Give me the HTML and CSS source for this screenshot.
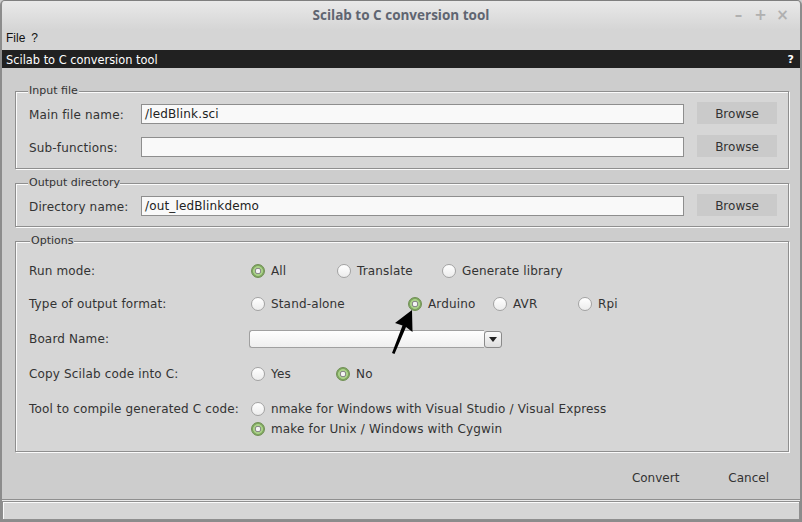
FILE: index.html
```html
<!DOCTYPE html>
<html>
<head>
<meta charset="utf-8">
<title>Scilab to C conversion tool</title>
<link rel="stylesheet" href="styles.css">
</head>
<body>
<div class="window">
  <header class="titlebar">
    <span></span>
    <span class="title">Scilab to C conversion tool</span>
    <div class="controls"><span>&#8211;</span><span>+</span><span>&#215;</span></div>
  </header>
  <nav class="menubar"><span>File</span><span>?</span></nav>
  <div class="docbar"><span>Scilab to C conversion tool</span><span class="help">?</span></div>
  <main class="content">
    <section class="group g-input">
      <span class="legend">Input file</span>
      <div class="filerow">
        <span class="label">Main file name:</span>
        <div class="field">/ledBlink.sci</div>
        <button class="browse">Browse</button>
      </div>
      <div class="filerow">
        <span class="label">Sub-functions:</span>
        <div class="field"></div>
        <button class="browse">Browse</button>
      </div>
    </section>
    <section class="group g-output">
      <span class="legend clip">Output directory</span>
      <div class="filerow">
        <span class="label">Directory name:</span>
        <div class="field">/out_ledBlinkdemo</div>
        <button class="browse">Browse</button>
      </div>
    </section>
    <section class="group g-options">
      <span class="legend opt">Options</span>
      <div class="orow">
        <span class="olabel">Run mode:</span>
        <div class="choices">
          <label class="radio w86"><i class="dot on"></i>All</label>
          <label class="radio w105"><i class="dot"></i>Translate</label>
          <label class="radio"><i class="dot"></i>Generate library</label>
        </div>
      </div>
      <div class="orow">
        <span class="olabel">Type of output format:</span>
        <div class="choices">
          <label class="radio w157"><i class="dot"></i>Stand-alone</label>
          <label class="radio w85"><i class="dot on"></i>Arduino</label>
          <label class="radio w85"><i class="dot"></i>AVR</label>
          <label class="radio"><i class="dot"></i>Rpi</label>
        </div>
      </div>
      <div class="orow">
        <span class="olabel">Board Name:</span>
        <div class="combo">
          <div class="combo-field"></div>
          <div class="combo-btn"><svg width="8" height="5" viewBox="0 0 8 5"><path d="M0 0h8L4 5z" fill="#222"/></svg></div>
        </div>
      </div>
      <div class="orow">
        <span class="olabel">Copy Scilab code into C:</span>
        <div class="choices">
          <label class="radio w85"><i class="dot"></i>Yes</label>
          <label class="radio"><i class="dot on"></i>No</label>
        </div>
      </div>
      <div class="orow tall">
        <span class="olabel">Tool to compile generated C code:</span>
        <div class="stack">
          <label class="radio"><i class="dot"></i>nmake for Windows with Visual Studio / Visual Express</label>
          <label class="radio"><i class="dot on"></i>make for Unix / Windows with Cygwin</label>
        </div>
      </div>
    </section>
    <div class="actions">
      <button class="act">Convert</button>
      <button class="act">Cancel</button>
    </div>
  </main>
  <footer class="status"><div class="status-box"></div></footer>
  <svg class="pointer" width="30" height="52" viewBox="0 0 30 52">
    <path d="M24 4 L24.5 26 L18 21 L6.5 48 L4 47 L14.5 19.5 L7 17 Z" fill="#000"/>
  </svg>
</div>
</body>
</html>
```

FILE: styles.css
```css
* { box-sizing: border-box; margin: 0; padding: 0; }
html, body { width: 802px; height: 522px; overflow: hidden; }
body {
  font-family: "DejaVu Sans", sans-serif;
  font-size: 12px;
  color: #333;
  background: #cdcdcd;
}
.window {
  position: relative;
  width: 802px;
  height: 522px;
  display: flex;
  flex-direction: column;
  border: 2px solid #8c8c8c;
  border-top: 1px solid #7f7f7f;
  border-radius: 5px 5px 0 0;
  background: #cdcdcd;
  overflow: hidden;
}
.titlebar {
  height: 29px;
  flex: none;
  display: grid;
  grid-template-columns: 1fr auto 1fr;
  align-items: center;
  background: linear-gradient(#e9e9e9, #d5d5d5);
}
.title {
  font-family: "Open Sans", sans-serif;
  font-weight: bold;
  font-size: 13.5px;
  color: #5f6571;
  padding-bottom: 1px;
}
.controls {
  justify-self: end;
  display: flex;
  gap: 9px;
  padding-right: 11px;
  color: #b0b0b0;
  font-family: "DejaVu Sans", sans-serif;
  font-size: 15px;
  font-weight: bold;
  padding-bottom: 2px;
}
.controls span { width: 13px; text-align: center; }
.menubar {
  height: 20px;
  flex: none;
  display: flex;
  align-items: center;
  gap: 6px;
  padding-left: 4px;
  padding-bottom: 4px;
  background: #d5d5d5;
  font-family: "Liberation Sans", sans-serif;
  font-size: 12px;
  color: #111;
}
.docbar {
  height: 18px;
  flex: none;
  display: flex;
  align-items: center;
  justify-content: space-between;
  padding: 1px 6px 0 4px;
  background: #212121;
  color: #fff;
  font-size: 11.4px;
}
.docbar .help { font-weight: bold; font-size: 11px; }
.content {
  flex: 1;
  display: flex;
  flex-direction: column;
  padding: 23px 11px 0 13px;
  letter-spacing: 0.15px;
}
.group {
  position: relative;
  background: #d6d6d6;
  border: 1px solid #8f8f8f;
  box-shadow: inset 1px 1px 0 #fbfbfb, 1px 1px 0 #fbfbfb;
  padding: 0 11px 0 13px;
}
.g-input { padding-top: 10px; padding-bottom: 11px; display: flex; flex-direction: column; gap: 11px; }
.g-output { margin-top: 14px; padding-top: 10px; padding-bottom: 10px; }
.g-options { margin-top: 14px; height: 211px; padding-top: 18px; }
.legend {
  position: absolute;
  top: -8px;
  left: 12px;
  padding: 0 1px;
  font-size: 11px;
  line-height: 14px;
  letter-spacing: 0;
  background: linear-gradient(#cdcdcd 0 8px, #d6d6d6 8px);
  color: #333;
  white-space: nowrap;
}
.legend.clip { max-width: 92px; overflow: hidden; }
.legend.opt { left: 14px; }
.filerow {
  display: grid;
  grid-template-columns: 99px 1fr 80px;
  column-gap: 13px;
  align-items: end;
  height: 22px;
}
.label { align-self: center; padding-top: 3px; white-space: nowrap; }
.field {
  height: 20px;
  background: #f9f9f9;
  border: 1px solid #8e8e8e;
  padding: 1px 3px 0;
  line-height: 17px;
  font-size: 12px;
  color: #222;
}
.browse, .act {
  font-family: "DejaVu Sans", sans-serif;
  font-size: 12px;
  letter-spacing: 0;
  color: #333;
  border: none;
  background: #cacaca;
  height: 22px;
  padding-top: 1px;
}
.orow {
  display: flex;
  align-items: center;
  height: 20px;
  margin-bottom: 15px;
}
.g-options .orow:nth-of-type(1) { margin-bottom: 13px; }
.orow.tall { height: 40px; align-items: flex-start; margin-bottom: 0; }
.orow.tall .olabel { line-height: 20px; }
.olabel { width: 220px; flex: none; padding-top: 1px; white-space: nowrap; }
.choices { display: flex; align-items: center; padding-left: 2px; }
.stack { display: flex; flex-direction: column; padding-left: 2px; }
.radio {
  display: flex;
  align-items: center;
  gap: 6px;
  height: 20px;
  padding-top: 1px;
  white-space: nowrap;
  color: #333;
}
.w85 { width: 85px; }
.w86 { width: 86px; }
.w105 { width: 105px; }
.w157 { width: 157px; }
.dot {
  width: 14px;
  height: 14px;
  border-radius: 50%;
  flex: none;
  border: 1px solid #a3a3a3;
  background: linear-gradient(#ffffff, #ececec);
}
.dot.on {
  border: 1px solid #6f8f52;
  background: radial-gradient(circle, #f4f4f4 0 2px, #8a8a8a 2.4px 2.9px, #a9d088 3.3px 4.6px, #7fa760 5.2px);
}
.combo { display: flex; align-items: center; width: 253px; height: 18px; margin-top: 2px; }
.combo-field {
  flex: 1;
  height: 18px;
  border: 1px solid #a0a0a0;
  border-right: none;
  border-radius: 3px 0 0 3px;
  background: linear-gradient(#fefefe, #efefef);
}
.combo-btn {
  width: 18px;
  height: 17px;
  display: grid;
  place-items: center;
  border: 1px solid #8a8a8a;
  border-radius: 3px;
  background: linear-gradient(#fafafa, #dedede);
}
.actions {
  flex: 1;
  display: flex;
  justify-content: flex-end;
  align-items: center;
  gap: 25px;
  padding: 3px 8px 0 0;
}
.act { background: transparent; padding: 1px 12px 0; }
.status {
  height: 21px;
  flex: none;
  border-top: 1px solid #8f8f8f;
  padding: 1px 0 0 0;
  background: #e8e8e8;
}
.status-box {
  height: 100%;
  border: 1px solid #8f8f8f;
  box-shadow: inset 1px 1px 0 #fbfbfb;
  background: #d6d6d6;
}
.pointer { position: absolute; left: 386px; top: 305px; }
```
